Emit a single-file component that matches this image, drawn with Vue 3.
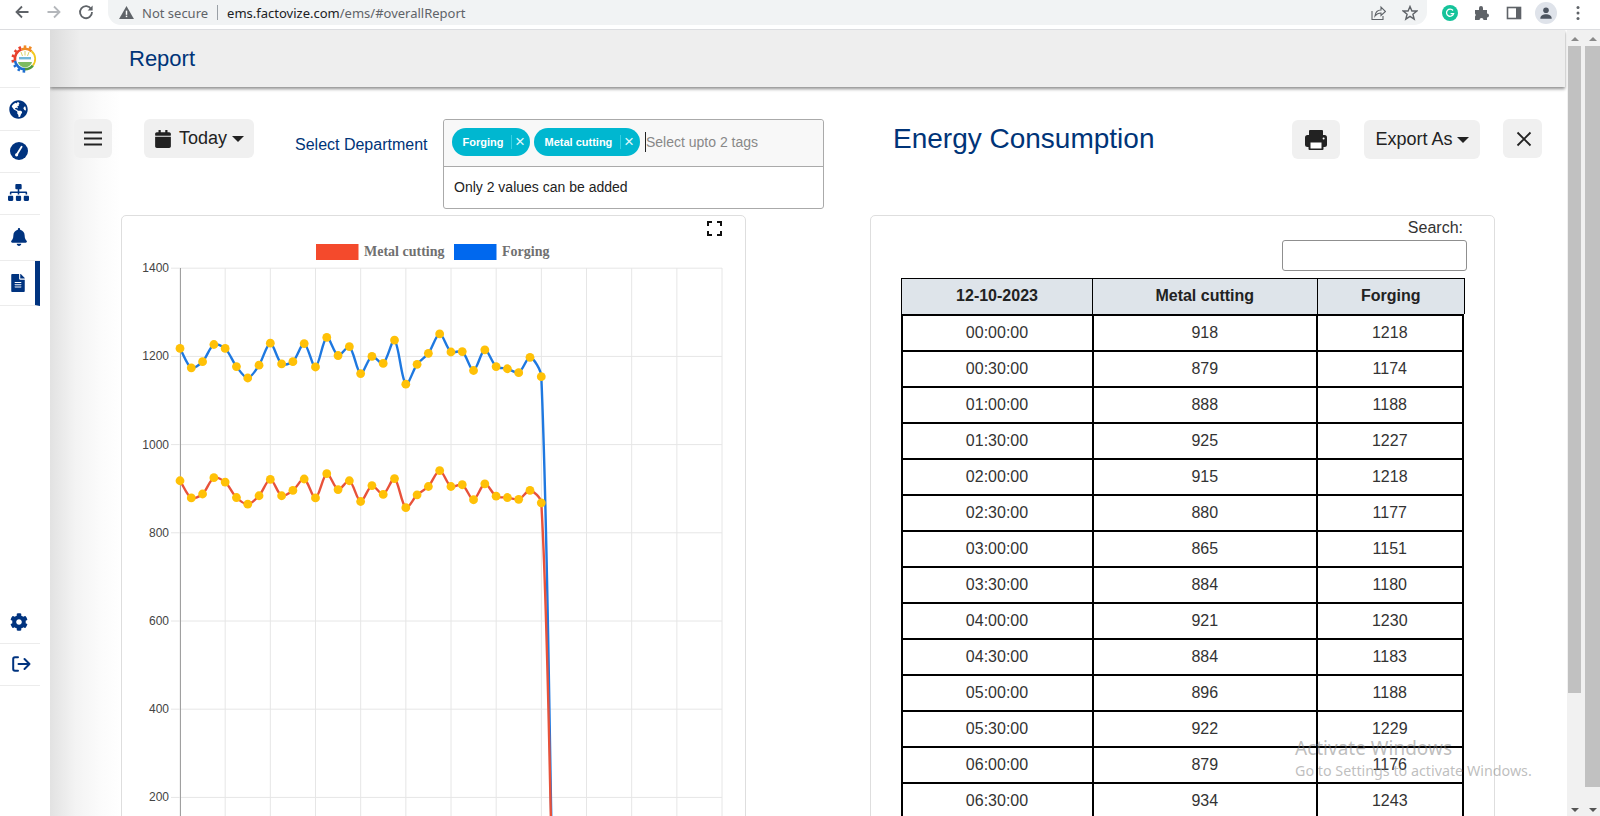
<script setup>
import { computed } from 'vue'

const times = ['00:00:00','00:30:00','01:00:00','01:30:00','02:00:00','02:30:00','03:00:00','03:30:00','04:00:00','04:30:00','05:00:00','05:30:00','06:00:00','06:30:00']
const metal = [918,879,888,925,915,880,865,884,921,884,896,922,879,934,898,918,871,907,887,923,857,886,905,941,905,909,875,911,883,880,876,896,868]
const forging = [1218,1174,1188,1227,1218,1177,1151,1180,1230,1183,1188,1229,1176,1243,1202,1222,1161,1200,1184,1237,1137,1182,1207,1251,1210,1211,1168,1215,1177,1172,1163,1198,1154]
const rows = times.map((t, i) => ({ t, m: metal[i], f: forging[i] }))

const X0 = 180, DX = 11.29, Y0 = 885.6, K = 0.441
const xv = Array.from({ length: 13 }, (_, i) => 180 + i * 45.17)
const yticks = [1400, 1200, 1000, 800, 600, 400, 200].map(v => ({ v, y: Y0 - v * K }))

const teeth = Array.from({ length: 9 }, (_, i) => {
  const a = 95 + i * 25
  return { a, c: a < 170 ? '#1f6fd0' : a < 250 ? '#e8412c' : '#f08a24' }
})

function pts(arr) {
  const p = arr.map((v, i) => ({ x: X0 + i * DX, y: Y0 - v * K }))
  p.push({ x: X0 + arr.length * DX, y: Y0 })
  return p
}
function spline(p) {
  const t = 0.3
  const c = p.map((cur, i) => {
    const a = p[Math.max(i - 1, 0)], b = p[Math.min(i + 1, p.length - 1)]
    const d1 = Math.hypot(cur.x - a.x, cur.y - a.y), d2 = Math.hypot(b.x - cur.x, b.y - cur.y)
    const s = d1 + d2 || 1
    return {
      px: cur.x - (t * d1 / s) * (b.x - a.x), py: cur.y - (t * d1 / s) * (b.y - a.y),
      nx: cur.x + (t * d2 / s) * (b.x - a.x), ny: cur.y + (t * d2 / s) * (b.y - a.y)
    }
  })
  let d = `M${p[0].x} ${p[0].y}`
  for (let i = 1; i < p.length; i++) {
    d += `C${c[i - 1].nx.toFixed(1)} ${c[i - 1].ny.toFixed(1)} ${c[i].px.toFixed(1)} ${c[i].py.toFixed(1)} ${p[i].x.toFixed(1)} ${p[i].y.toFixed(1)}`
  }
  return d
}
const mp = computed(() => pts(metal))
const fp = computed(() => pts(forging))
const mPath = computed(() => spline(mp.value))
const fPath = computed(() => spline(fp.value))
</script>

<template>
  <div class="page">
    <div class="chrome">
      <svg class="cb" viewBox="0 0 16 16" width="16" height="16"><path d="M14.5 8H2.5M8 2.5L2.5 8 8 13.5" fill="none" stroke="#5f6368" stroke-width="1.8"/></svg>
      <svg class="cb" viewBox="0 0 16 16" width="16" height="16"><path d="M1.5 8H13.5M8 2.5L13.5 8 8 13.5" fill="none" stroke="#b4b7bb" stroke-width="1.8"/></svg>
      <svg class="cb" viewBox="0 0 16 16" width="16" height="16"><path d="M13.2 5.2A6 6 0 1 0 14 8" fill="none" stroke="#5f6368" stroke-width="1.8"/><path d="M14.6 1.4V6.4H9.6Z" fill="#5f6368"/></svg>
      <div class="omni">
        <svg viewBox="0 0 16 14" width="15" height="13"><path d="M8 0L16 14H0Z" fill="#5f6368"/><rect x="7.2" y="5" width="1.6" height="4.5" fill="#fff"/><rect x="7.2" y="10.4" width="1.6" height="1.6" fill="#fff"/></svg>
        <span class="ns">Not secure</span>
        <span class="sep"></span>
        <span class="url">ems.factovize.com<span class="urlg">/ems/#overallReport</span></span>
        <span class="grow"></span>
        <svg viewBox="0 0 16 16" width="16" height="16"><path d="M2 6V14.5H13V11M5 11C5.5 7 8 5 11 5V2L15.5 6.5 11 10.5V8C8.5 8 6.5 9 5 11Z" fill="none" stroke="#5f6368" stroke-width="1.1"/></svg>
        <svg class="star" viewBox="0 0 16 16" width="16" height="16"><path d="M8 1.5L9.9 6H14.8L10.9 9.2 12.2 14.2 8 11.4 3.8 14.2 5.1 9.2 1.2 6H6.1Z" fill="none" stroke="#5f6368" stroke-width="1.4"/></svg>
      </div>
      <div class="exts">
        <svg viewBox="0 0 16 16" width="16" height="16"><circle cx="8" cy="8" r="8" fill="#15c39a"/><path d="M11 5.5A3.6 3.6 0 1 0 11.6 8.6H8.6" fill="none" stroke="#fff" stroke-width="1.3"/></svg>
        <svg viewBox="0 0 16 16" width="16" height="16"><path d="M1 5H5V3A2 2 0 0 1 9 3V5H13V8.5A2 2 0 0 1 13 12.5V15H9.5A2 2 0 0 0 5.5 15H1V11.5A2 2 0 0 0 1 8.5Z" fill="#5f6368"/></svg>
        <svg viewBox="0 0 16 16" width="16" height="16"><rect x="1.5" y="2.5" width="13" height="11" fill="#fff" stroke="#5f6368" stroke-width="1.6"/><rect x="10" y="2.5" width="4.5" height="11" fill="#5f6368"/></svg>
        <span class="avatar"><svg viewBox="0 0 16 16" width="14" height="14"><circle cx="8" cy="4.8" r="3.2" fill="#4d5560"/><path d="M1.5 14.5C1.5 10.5 5 9.5 8 9.5S14.5 10.5 14.5 14.5Z" fill="#4d5560"/></svg></span>
        <svg viewBox="0 0 16 16" width="16" height="16"><circle cx="8" cy="2.5" r="1.5" fill="#5f6368"/><circle cx="8" cy="8" r="1.5" fill="#5f6368"/><circle cx="8" cy="13.5" r="1.5" fill="#5f6368"/></svg>
      </div>
    </div>

    <div class="body">
      <aside class="side">
        <div class="logo">
          <svg viewBox="0 0 28 28" width="28" height="28">
            <g transform="translate(14 14)">
              <rect v-for="t in teeth" :key="t.a" x="11" y="-1.3" width="2.6" height="2.6" :fill="t.c" :transform="`rotate(${t.a})`"/>
              <circle r="10.2" fill="none" pathLength="360" stroke="#1f6fd0" stroke-width="2.6" stroke-dasharray="82 360" transform="rotate(90)"/>
              <circle r="10.2" fill="none" pathLength="360" stroke="#e8412c" stroke-width="2.6" stroke-dasharray="80 360" transform="rotate(170)"/>
              <circle r="10.2" fill="none" pathLength="360" stroke="#f08a24" stroke-width="2.6" stroke-dasharray="60 360" transform="rotate(250)"/>
              <circle r="10.2" fill="none" pathLength="360" stroke="#f2c81e" stroke-width="1.8" stroke-dasharray="90 360" transform="rotate(310)"/>
              <circle r="10.2" fill="none" pathLength="360" stroke="#4f9a3b" stroke-width="2.6" stroke-dasharray="50 360" transform="rotate(40)"/>
              <path d="M-4-7L-2.5-3M0-8V-3.5M4-7L2.5-3" stroke="#d8d56a" stroke-width="1"/>
              <rect x="-6" y="-2" width="12" height="2.4" fill="#6fb7d8"/>
              <path d="M-7 3H7C6 7 2 8.5 0 8.5S-6 7-7 3Z" fill="#7dbb60"/>
            </g>
          </svg>
        </div>
        <a class="item h42"><svg viewBox="0 0 496 512" width="19" height="19"><path fill="#00337f" d="M248 8C111.03 8 0 119.03 0 256s111.03 248 248 248 248-111.03 248-248S384.97 8 248 8zm82.29 357.6c-3.9 3.88-7.99 7.95-11.31 11.28-2.99 3-5.1 6.7-6.17 10.71-1.51 5.66-2.73 11.38-4.77 16.87l-17.39 46.85c-13.76 3-28 4.69-42.65 4.69v-27.38c1.69-12.62-7.64-36.26-22.63-51.25-6-6-9.37-14.14-9.37-22.63v-32.01c0-11.64-6.27-22.34-16.46-27.97-14.37-7.95-34.81-19.06-48.81-26.11-11.48-5.78-22.1-13.14-31.65-21.75l-.8-.72a114.792 114.792 0 0 1-18.06-20.74c-9.38-13.77-24.66-36.42-34.59-51.14 20.47-45.5 57.36-82.04 103.2-101.89l24.01 12.01C203.48 89.74 216 82.01 216 70.11v-11.3c7.99-1.29 16.12-2.11 24.39-2.42l28.3 28.3c6.25 6.25 6.25 16.38 0 22.63L264 112l-10.34 10.34c-3.12 3.12-3.12 8.19 0 11.31l4.69 4.69c3.12 3.12 3.12 8.19 0 11.31l-8 8a8.008 8.008 0 0 1-5.66 2.34h-8.99c-2.08 0-4.08.81-5.58 2.27l-9.92 9.65a8.008 8.008 0 0 0-1.58 9.31l15.59 31.19c2.66 5.32-1.21 11.58-7.15 11.58h-5.64c-1.93 0-3.79-.7-5.24-1.96l-9.28-8.06a16.017 16.017 0 0 0-15.55-3.1l-31.17 10.39a11.95 11.95 0 0 0-8.17 11.34c0 4.53 2.56 8.66 6.61 10.69l11.08 5.54c9.41 4.71 19.79 7.16 30.31 7.16s22.59 27.29 32 32h66.75c8.49 0 16.62 3.37 22.63 9.37l13.69 13.69a30.503 30.503 0 0 1 8.93 21.57 46.536 46.536 0 0 1-13.72 32.98zM417 274.25c-5.79-1.45-10.84-5-14.15-9.97l-17.98-26.97a23.97 23.97 0 0 1 0-26.62l19.59-29.38c2.32-3.47 5.5-6.29 9.24-8.15l12.98-6.49C440.2 193.59 448 223.87 448 256c0 8.67-.74 17.16-1.82 25.54L417 274.25z"/></svg></a>
        <a class="item h42 lift"><svg viewBox="0 0 18 18" width="18" height="18"><circle cx="9" cy="9" r="9" fill="#00337f"/><path d="M7 12.2L11.6 4.8" stroke="#fff" stroke-width="1.8" stroke-linecap="round"/><circle cx="6.6" cy="12.8" r="1.6" fill="#fff"/></svg></a>
        <a class="item h42 lift"><svg viewBox="0 0 640 512" width="21" height="17"><path fill="#00337f" d="M128 352H32c-17.67 0-32 14.33-32 32v96c0 17.67 14.33 32 32 32h96c17.67 0 32-14.33 32-32v-96c0-17.67-14.33-32-32-32zm-24-80h192v48h48v-48h192v48h48v-57.59c0-21.17-17.23-38.41-38.41-38.41H344v-64h40c17.67 0 32-14.33 32-32V32c0-17.67-14.33-32-32-32H256c-17.67 0-32 14.33-32 32v96c0 17.67 14.33 32 32 32h40v64H94.41C73.23 224 56 241.23 56 262.41V320h48v-48zm264 80h-96c-17.67 0-32 14.33-32 32v96c0 17.67 14.33 32 32 32h96c17.67 0 32-14.33 32-32v-96c0-17.67-14.33-32-32-32zm240 0h-96c-17.67 0-32 14.33-32 32v96c0 17.67 14.33 32 32 32h96c17.67 0 32-14.33 32-32v-96c0-17.67-14.33-32-32-32z"/></svg></a>
        <a class="item h46 lift"><svg viewBox="0 0 448 512" width="16" height="18"><path fill="#00337f" d="M224 512c35.32 0 63.97-28.65 63.97-64H160.03c0 35.35 28.65 64 63.97 64zm215.39-149.71c-19.32-20.76-55.47-51.99-55.47-154.29 0-77.7-54.48-139.9-127.94-155.16V32c0-17.67-14.32-32-31.98-32s-31.98 14.33-31.98 32v20.84C118.56 68.1 64.08 130.3 64.08 208c0 102.3-36.15 133.53-55.47 154.29-6 6.45-8.66 14.16-8.61 21.71.11 16.4 12.98 32 32.1 32h383.8c19.12 0 32-15.6 32.1-32 .05-7.55-2.61-15.27-8.61-21.71z"/></svg></a>
        <a class="item h45 active"><svg viewBox="0 0 384 512" width="14" height="18"><path fill="#00337f" d="M224 136V0H24C10.7 0 0 10.7 0 24v464c0 13.3 10.7 24 24 24h336c13.3 0 24-10.7 24-24V160H248c-13.2 0-24-10.8-24-24zm64 236c0 6.6-5.4 12-12 12H108c-6.6 0-12-5.4-12-12v-8c0-6.6 5.4-12 12-12h168c6.6 0 12 5.4 12 12v8zm0-64c0 6.6-5.4 12-12 12H108c-6.6 0-12-5.4-12-12v-8c0-6.6 5.4-12 12-12h168c6.6 0 12 5.4 12 12v8zm0-72v8c0 6.6-5.4 12-12 12H108c-6.6 0-12-5.4-12-12v-8c0-6.6 5.4-12 12-12h168c6.6 0 12 5.4 12 12zm96-114.1v6.1H256V0h6.1c6.4 0 12.5 2.5 17 7l97.9 98c4.5 4.5 7 10.6 7 16.9z"/></svg></a>
        <div class="grow"></div>
        <a class="item h42 lift"><svg viewBox="0 0 512 512" width="18" height="18"><path fill="#00337f" d="M487.4 315.7l-42.6-24.6c4.3-23.2 4.3-47 0-70.2l42.6-24.6c4.9-2.8 7.1-8.6 5.5-14-11.1-35.6-30-67.8-54.7-94.6-3.8-4.1-10-5.1-14.8-2.3L380.8 110c-17.9-15.4-38.5-27.3-60.8-35.1V25.8c0-5.6-3.9-10.5-9.4-11.7-36.7-8.2-74.3-7.8-109.2 0-5.5 1.2-9.4 6.1-9.4 11.7V75c-22.2 7.9-42.8 19.8-60.8 35.1L88.7 85.5c-4.9-2.8-11-1.9-14.8 2.3-24.7 26.7-43.6 58.9-54.7 94.6-1.7 5.4.6 11.2 5.5 14L67.3 221c-4.3 23.2-4.3 47 0 70.2l-42.6 24.6c-4.9 2.8-7.1 8.6-5.5 14 11.1 35.6 30 67.8 54.7 94.6 3.8 4.1 10 5.1 14.8 2.3l42.6-24.6c17.9 15.4 38.5 27.3 60.8 35.1v49.2c0 5.6 3.9 10.5 9.4 11.7 36.7 8.2 74.3 7.8 109.2 0 5.5-1.2 9.4-6.1 9.4-11.7v-49.2c22.2-7.9 42.8-19.8 60.8-35.1l42.6 24.6c4.9 2.8 11 1.9 14.8-2.3 24.7-26.7 43.6-58.9 54.7-94.6 1.5-5.5-.7-11.3-5.6-14.1zM256 336c-44.1 0-80-35.9-80-80s35.9-80 80-80 80 35.9 80 80-35.9 80-80 80z"/></svg></a>
        <a class="item h42 lift logout"><svg viewBox="0 0 19 16" width="19" height="16"><path d="M6 1.2H3A1.8 1.8 0 0 0 1.2 3V13A1.8 1.8 0 0 0 3 14.8H6M6.5 8H17.5M12.5 3L17.5 8 12.5 13" fill="none" stroke="#00337f" stroke-width="2" stroke-linecap="round" stroke-linejoin="round"/></svg></a>
        <div class="sidefoot"></div>
      </aside>

      <main class="main">
        <header class="head"><h1>Report</h1></header>
        <div class="toolbar">
          <button class="btn menu"><svg viewBox="0 0 18 15" width="18" height="15"><path d="M0 1.5H18M0 7.5H18M0 13.5H18" stroke="#222" stroke-width="2.2"/></svg></button>
          <button class="btn today">
            <svg viewBox="0 0 448 512" width="16" height="18"><path fill="#222" d="M12 192h424c6.6 0 12 5.4 12 12v260c0 26.5-21.5 48-48 48H48c-26.5 0-48-21.5-48-48V204c0-6.6 5.4-12 12-12zm436-44v-36c0-26.5-21.5-48-48-48h-48V12c0-6.6-5.4-12-12-12h-40c-6.6 0-12 5.4-12 12v52H160V12c0-6.6-5.4-12-12-12h-40c-6.6 0-12 5.4-12 12v52H48C21.5 64 0 85.5 0 112v36c0 6.6 5.4 12 12 12h424c6.6 0 12-5.4 12-12z"/></svg>
            <span>Today</span><i class="caret big"></i>
          </button>
          <label class="dept">Select Department</label>
          <div class="tagbox">
            <div class="tagrow">
              <span class="chip c1">Forging<em></em><b>×</b></span>
              <span class="chip c2">Metal cutting<em></em><b>×</b></span>
              <span class="cursor"></span>
              <span class="ph">Select upto 2 tags</span>
            </div>
            <div class="hint">Only 2 values can be added</div>
          </div>
          <h2 class="title">Energy Consumption</h2>
          <button class="btn print"><svg viewBox="0 0 22 20" width="22" height="20"><rect x="4" y="0" width="14" height="7" rx="1" fill="#222"/><rect x="0" y="5" width="22" height="12" rx="2.5" fill="#222"/><rect x="3.5" y="11" width="15" height="9" rx="1" fill="#222"/><rect x="5.5" y="12.5" width="11" height="6" fill="#fff"/><circle cx="18.6" cy="8.6" r="1" fill="#fff"/></svg></button>
          <button class="btn export"><span>Export As</span><i class="caret"></i></button>
          <button class="btn close"><svg viewBox="0 0 16 16" width="16" height="16"><path d="M1.5 1.5L14.5 14.5M14.5 1.5L1.5 14.5" stroke="#222" stroke-width="1.8"/></svg></button>
        </div>

        <div class="cards">
          <section class="card chart">
            <svg viewBox="122 216 624 600" width="624" height="600">
              <g stroke="#e6e6e6" stroke-width="1">
                <line v-for="x in xv" :key="x" :x1="x" :x2="x" y1="268" y2="817"/>
                <line v-for="t in yticks" :key="t.v" x1="171" x2="722" :y1="t.y" :y2="t.y"/>
              </g>
              <line x1="180.5" x2="180.5" y1="268" y2="817" stroke="#a0a0a0"/>
              <text v-for="t in yticks" :key="'l'+t.v" x="169" :y="t.y + 4" text-anchor="end" class="tick">{{ t.v }}</text>
              <rect x="316" y="244" width="42.5" height="16" fill="#f44a2c"/>
              <text x="364" y="256" class="legend">Metal cutting</text>
              <rect x="454" y="244" width="42.5" height="16" fill="#0068ee"/>
              <text x="502" y="256" class="legend">Forging</text>
              <path d="M708 226V222H712M717 222H721V226M721 231V235H717M712 235H708V231" fill="none" stroke="#111" stroke-width="2"/>
              <path :d="fPath" fill="none" stroke="#1e78e0" stroke-width="2.4"/>
              <path :d="mPath" fill="none" stroke="#e8523a" stroke-width="2.4"/>
              <circle v-for="(p, i) in fp.slice(0, 33)" :key="'f'+i" :cx="p.x" :cy="p.y" r="4.4" fill="#ffc107"/>
              <circle v-for="(p, i) in mp.slice(0, 33)" :key="'m'+i" :cx="p.x" :cy="p.y" r="4.4" fill="#ffc107"/>
            </svg>
          </section>

          <section class="card tablecard">
            <div class="search">Search:</div>
            <div class="searchrow"><input class="sinput" type="text" /></div>
            <table class="thead">
              <colgroup><col class="c1w"/><col class="c2w"/><col class="c3w"/></colgroup>
              <tr><th>12-10-2023</th><th>Metal cutting</th><th>Forging</th></tr>
            </table>
            <table class="tbody">
              <colgroup><col class="c1w"/><col class="c2w"/><col class="c3bw"/></colgroup>
              <tr v-for="r in rows" :key="r.t"><td>{{ r.t }}</td><td>{{ r.m }}</td><td>{{ r.f }}</td></tr>
            </table>
          </section>
        </div>
      </main>

      <div class="sbar s1"><i class="up"></i><div class="thumb t1"></div><div class="grow"></div><i class="dn"></i></div>
      <div class="sbar s2"><i class="up"></i><div class="thumb t2"></div><div class="grow"></div><i class="dn"></i></div>
    </div>

    <div class="wm">
      <div class="w1">Activate Windows</div>
      <div class="w2">Go to Settings to activate Windows.</div>
    </div>
  </div>
</template>

<style>
html, body { margin: 0; padding: 0; overflow: hidden; background: #fff; }
</style>

<style scoped>
.page { width: 1600px; height: 816px; overflow: hidden; position: relative; font-family: "Liberation Sans", Arial, sans-serif; color: #222; display: flex; flex-direction: column; }
.grow { flex: 1; }

.chrome { height: 30px; box-sizing: border-box; border-bottom: 1px solid #dcdde0; display: flex; align-items: flex-start; background: #fff; padding-left: 14px; flex: none; }
.cb { margin-top: 4px; margin-right: 16px; }
.omni { margin-left: -2px; width: 1319px; height: 25px; background: #f1f3f4; border-radius: 0 0 13px 13px; display: flex; align-items: center; padding: 0 9px 0 11px; box-sizing: border-box; font-family: "Noto Sans", sans-serif; font-size: 13px; }
.ns { color: #5f6368; margin-left: 8px; }
.sep { width: 1px; height: 15px; background: #9aa0a6; margin: 0 9px; }
.url { color: #202124; }
.urlg { color: #5f6368; }
.star { margin-left: 16px; }
.exts { display: flex; align-items: center; height: 25px; margin-left: 15px; gap: 16px; }
.avatar { width: 22px; height: 22px; border-radius: 50%; background: #dfe3ea; display: flex; align-items: center; justify-content: center; margin: 0 -3px; }

.body { flex: 1; display: flex; min-height: 0; }

.side { width: 50px; flex: none; background: #fff; display: flex; flex-direction: column; }
.logo { height: 59px; width: 50px; box-sizing: border-box; border-bottom: 1px solid transparent; display: flex; align-items: center; justify-content: center; background: linear-gradient(#ececec, #ececec) left bottom / 40px 1px no-repeat; }
.item { width: 40px; box-sizing: border-box; border-bottom: 1px solid #ececec; display: flex; align-items: center; justify-content: center; padding-right: 3px; }
.h42 { height: 42px; }
.h46 { height: 46px; }
.h45 { height: 45px; }
.lift { padding-bottom: 2px; }
.logout { padding-left: 3px; padding-right: 0; }
.active { border-right: 5px solid #00337f; padding-right: 0; padding-left: 0; }
.sidefoot { height: 130px; }

.main { width: 1517px; flex: none; overflow: hidden; background: linear-gradient(90deg, #e2e2e2 0, #f3f3f3 25px, #fbfbfb 50px, #fff 70px); }
.head { height: 57px; margin-right: 2px; background: linear-gradient(90deg, #dcdcdc 0, #eeeeee 30px); box-shadow: 0 2px 3px #8f8f8f; display: flex; align-items: center; padding-left: 79px; box-sizing: border-box; }
.head h1 { margin: 0; font-weight: 400; font-size: 22px; color: #003478; }

.toolbar { display: flex; align-items: flex-start; height: 128px; padding: 32px 0 0 24px; box-sizing: border-box; }
.btn { border: 0; background: #f0f0f0; border-radius: 6px; height: 39px; display: flex; align-items: center; justify-content: center; font-family: inherit; color: #222; padding: 0; }
.menu { width: 38px; }
.today { width: 110px; margin-left: 32px; font-size: 18px; gap: 8px; padding-left: 1px; box-sizing: border-box; }
.caret { width: 0; height: 0; border-left: 6px solid transparent; border-right: 6px solid transparent; border-top: 6px solid #222; margin-left: -3px; }
.dept { margin: 17px 0 0 41px; font-size: 16px; color: #003478; width: 148px; line-height: 18px; }
.tagbox { width: 381px; height: 90px; box-sizing: border-box; border: 1px solid #aaa; border-radius: 3px; font-size: 14px; }
.tagrow { height: 47px; background: #f8f8f8; border-bottom: 1px solid #aaa; display: flex; align-items: center; padding: 0 0 2px 8px; box-sizing: border-box; border-radius: 3px 3px 0 0; }
.chip { height: 28px; border-radius: 14px; background: #00b7d0; color: #fff; font-size: 11px; font-weight: 700; display: flex; align-items: center; padding-left: 10.5px; box-sizing: border-box; white-space: nowrap; }
.c1 { width: 78px; }
.c2 { width: 106px; margin-left: 4px; }
.chip em { width: 1px; height: 14px; background: #35d0e2; margin-left: 7.5px; }
.chip b { font-weight: 400; font-size: 17px; line-height: 16px; color: #dff8fb; width: 16px; text-align: center; }
.cursor { width: 1px; height: 20px; background: #222; margin-left: 5px; }
.ph { color: #888; font-size: 14px; }
.hint { padding: 12px 0 0 10px; line-height: 16px; color: #222; }
.title { margin: 2px 0 0 69px; width: 399px; font-weight: 400; font-size: 28px; line-height: 36px; color: #003478; }
.print { width: 48px; margin-top: 1px; }
.export { width: 116px; margin: 1px 0 0 24px; font-size: 18px; gap: 7px; }
.close { width: 39px; margin-left: 23px; padding-left: 2px; }

.cards { display: flex; align-items: flex-start; padding-left: 71px; }
.card { box-sizing: border-box; border: 1px solid #dedede; border-radius: 5px; background: #fff; height: 700px; }
.chart { width: 625px; overflow: hidden; }
.chart svg { display: block; }
.tick { font-size: 12px; fill: #444; font-family: "Liberation Sans", Arial, sans-serif; }
.legend { font-family: "Liberation Serif", serif; font-weight: 700; font-size: 14px; fill: #707070; }

.tablecard { width: 625px; margin-left: 124px; padding-top: 2px; }
.search { text-align: right; font-size: 16px; line-height: 20px; padding-right: 31px; color: #333; }
.searchrow { display: flex; justify-content: flex-end; padding-right: 27px; margin-top: 2px; }
.sinput { width: 185px; height: 31px; box-sizing: border-box; border: 1px solid #8f8f8f; border-radius: 3px; background: #fff; padding: 0; }
table { border-collapse: collapse; table-layout: fixed; margin-left: 30px; font-size: 16px; color: #333; }
.thead { width: 563px; margin-top: 7px; }
.tbody { width: 561px; margin-left: 29.5px; }
.c1w { width: 191px; }
.c2w { width: 224.5px; }
.c3w { width: 147.5px; }
.c3bw { width: 145.5px; }
th { height: 34.5px; padding: 0; background: #dee4ea; border: 1.5px solid #000; font-weight: 700; text-align: center; color: #222; }
td { height: 36px; padding: 0; border: 2px solid #000; text-align: center; box-sizing: border-box; }
.thead tr:first-child th { border-bottom: 0; }

.sbar { flex: none; width: 15px; background: #f1f1f1; display: flex; flex-direction: column; align-items: center; }
.s1 { width: 15px; }
.s2 { width: 18px; align-items: flex-end; }
.thumb { background: #c1c1c1; }
.t1 { width: 13px; height: 647px; }
.t2 { width: 15px; height: 741px; }
.up, .dn { display: block; width: 0; height: 0; border-left: 4px solid transparent; border-right: 4px solid transparent; flex: none; }
.s2 .up, .s2 .dn { margin-right: 3px; }
.up { border-bottom: 4px solid #8a8a8a; margin: 7px 0 5px; }
.dn { border-top: 4px solid #555; margin-bottom: 4px; }

.wm { position: absolute; left: 1295px; top: 735px; color: rgba(125, 125, 125, 0.5); font-family: "Noto Sans", sans-serif; white-space: nowrap; pointer-events: none; }
.w1 { font-size: 19px; line-height: 26px; }
.w2 { font-size: 14.3px; line-height: 20px; }
</style>
